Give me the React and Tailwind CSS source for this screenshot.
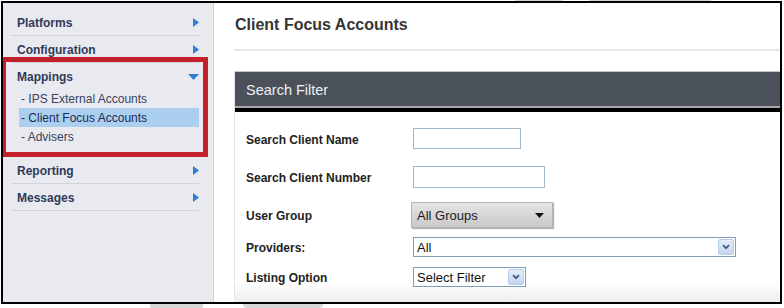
import React from "react";

function RightArrow() {
  return (
    <svg width="6" height="9" viewBox="0 0 6 9" className="block">
      <polygon points="0,0 6,4.5 0,9" fill="#2d80d2" />
    </svg>
  );
}

function DownArrow() {
  return (
    <svg width="11" height="6" viewBox="0 0 11 6" className="block">
      <polygon points="0,0 11,0 5.5,6" fill="#2d80d2" />
    </svg>
  );
}

function Chevron() {
  return (
    <svg width="8" height="6" viewBox="0 0 8 6" className="block">
      <path d="M1 1.2 L4 4.2 L7 1.2" fill="none" stroke="#44587f" strokeWidth="1.7" />
    </svg>
  );
}

function NavRow({ label }) {
  return (
    <div className="h-[27px] border-b border-[#d2d4da] flex items-center justify-between pl-[6px] pt-px">
      <span className="text-[12px] font-bold text-[#2f3a5a]">{label}</span>
      <RightArrow />
    </div>
  );
}

function SubRow({ label, active }) {
  return (
    <div
      className={
        "h-[19px] flex items-center pl-[2px] pt-px text-[12px] " +
        (active ? "bg-[#abcfee] text-[#1c2a55]" : "text-[#3a3f5c]")
      }
    >
      - {label}
    </div>
  );
}

function FormRow({ label, h, children, mt }) {
  return (
    <div className={"flex items-center " + mt + " " + h}>
      <div className="w-[167px] shrink-0 pt-[2px] text-[12px] font-bold text-[#222]">{label}</div>
      {children}
    </div>
  );
}

function BlueSelect({ w, text }) {
  return (
    <div className={"h-[20px] border border-[#7f9db9] bg-white flex items-center justify-between " + w}>
      <span className="pl-[3px] pt-px text-[13px] text-[#111] leading-none">{text}</span>
      <div className="mr-px w-[16px] h-[16px] rounded-[2px] border border-[#b9cde9] bg-linear-to-b from-[#e6eefa] to-[#c3d5ee] flex items-center justify-center">
        <Chevron />
      </div>
    </div>
  );
}

export default function App() {
  return (
    <div className="w-[784px] h-[308px] bg-white font-['Liberation_Sans',Arial,sans-serif] overflow-hidden">
      <div className="h-px flex">
        <div className="ml-[515px] w-[48px] bg-[#d4d4d4]" />
        <div className="ml-[26px] w-[122px] bg-[#d4d4d4]" />
      </div>
      <div className="relative ml-px w-[781px] h-[303px] border-2 border-black flex overflow-hidden">
        {/* Sidebar */}
        <div className="w-[211px] shrink-0 bg-[#e9eaef] border-r border-[#cfd1d6] pt-[6px] pl-[8px] pr-[14px]">
          <NavRow label="Platforms" />
          <NavRow label="Configuration" />
          <div className="border-b border-[#d2d4da]">
            <div className="h-[26px] flex items-center justify-between pl-[6px] pt-[2px]">
              <span className="text-[12px] font-bold text-[#2f3a5a]">Mappings</span>
              <DownArrow />
            </div>
            <div className="pl-[8px] pb-[10px]">
              <SubRow label="IPS External Accounts" />
              <SubRow label="Client Focus Accounts" active />
              <SubRow label="Advisers" />
            </div>
          </div>
          <NavRow label="Reporting" />
          <NavRow label="Messages" />
        </div>

        {/* Main */}
        <div className="flex-1 flex flex-col pl-[20px]">
          <div className="pt-[12px] h-[32px] ml-px text-[16px] leading-[20px] font-bold text-[#353535]">
            Client Focus Accounts
          </div>
          <div className="mt-[14px] h-[2px] bg-[#e7e7e7]" />
          <div className="mt-[20px] flex-1 flex flex-col border-l border-[#e4e4e4]">
            <div className="h-[35px] border-t border-[#c3c6ca] bg-[#4a515a] flex items-center pl-[11px] pt-[3px]">
              <span className="text-[14.5px] text-[#eef0f2]">Search Filter</span>
            </div>
            <div className="h-[2px] bg-[#a9a9a9]" />
            <div className="h-[4px] bg-black" />
            <div className="flex-1 pl-[11px] pt-[16px] bg-linear-to-b from-white from-[90%] to-[#ededed]">
              <FormRow label="Search Client Name" h="h-[21px]" mt="">
                <div className="w-[108px] h-[21px] border border-[#a3b5cb] bg-white" />
              </FormRow>
              <FormRow label="Search Client Number" h="h-[22px]" mt="mt-[17px]">
                <div className="w-[132px] h-[22px] border border-[#a3b5cb] bg-white" />
              </FormRow>
              <FormRow label="User Group" h="h-[26px]" mt="mt-[14px]">
                <div className="-ml-[2px] w-[142px] h-[26px] border border-[#b4b4b4] bg-linear-to-b from-[#e4e4e4] to-[#c9c9c9] shadow-[1px_1px_1px_rgba(0,0,0,0.3)] flex items-center justify-between pl-[5px] pr-[8px]">
                  <span className="text-[13px] pt-px text-[#1a1a1a]">All Groups</span>
                  <svg width="9" height="5" viewBox="0 0 9 5" className="block">
                    <polygon points="0,0 9,0 4.5,5" fill="#111" />
                  </svg>
                </div>
              </FormRow>
              <FormRow label="Providers:" h="h-[20px]" mt="mt-[9px]">
                <BlueSelect w="w-[323px]" text="All" />
              </FormRow>
              <FormRow label="Listing Option" h="h-[20px]" mt="mt-[10px]">
                <BlueSelect w="w-[113px]" text="Select Filter" />
              </FormRow>
            </div>
          </div>
        </div>

        {/* highlight annotation */}
        <div className="absolute left-[-2px] top-[54px] w-[207px] h-[100px] border-[5px] border-[#c2202b] pointer-events-none" />
      </div>
      <div className="h-[4px] flex">
        <div className="ml-[150px] w-[53px] bg-[#d6d6d6] rounded-b-[2px]" />
        <div className="ml-[40px] w-[80px] bg-[#d6d6d6] rounded-b-[4px]" />
      </div>
    </div>
  );
}
